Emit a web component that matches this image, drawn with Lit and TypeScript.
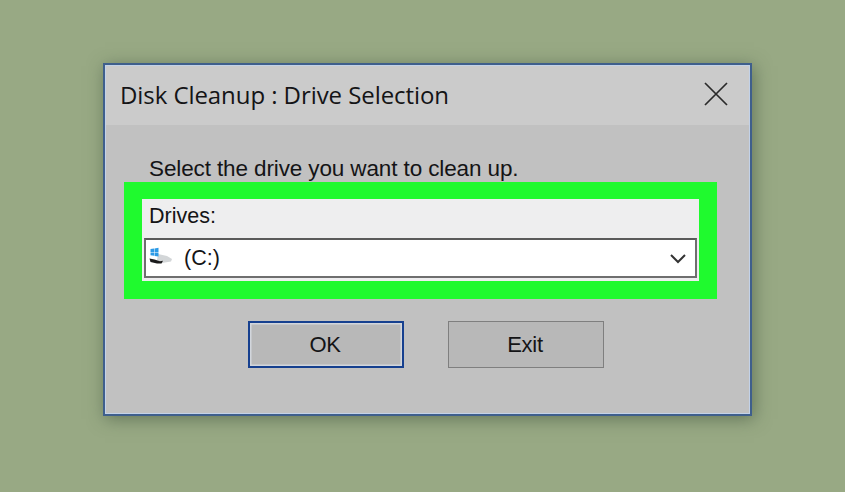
import { LitElement, html, css } from 'lit';
import { customElement } from 'lit/decorators.js';

@customElement('app-root')
export class AppRoot extends LitElement {
  static styles = css`
    :host {
      display: block;
      width: 845px;
      height: 492px;
      overflow: hidden;
      box-sizing: border-box;
      padding: 63px 0 0 103px;
      background: #98a984;
      font-family: 'Liberation Sans', Arial, sans-serif;
      color: #141416;
    }

    .window {
      box-sizing: border-box;
      width: 649px;
      height: 353px;
      border: 2px solid #3f5f8c;
      outline: 1px solid #c3d2e8;
      outline-offset: -3px;
      background: #c1c1c1;
      box-shadow: 2px 3px 16px rgba(50, 70, 50, 0.5);
      display: flex;
      flex-direction: column;
    }

    .titlebar {
      height: 60px;
      flex: none;
      box-sizing: border-box;
      padding: 0 23px 2px 15px;
      background: #cbcbcb;
      display: flex;
      align-items: center;
      justify-content: space-between;
    }

    .title {
      font-family: 'Open Sans', sans-serif;
      font-size: 24px;
      letter-spacing: -0.07px;
    }

    .close {
      width: 24px;
      height: 24px;
      display: block;
      margin-right: -1px;
    }

    .body {
      flex: 1;
      display: flex;
      flex-direction: column;
      padding: 30px 33px 0 19px;
    }

    .prompt {
      font-size: 22.5px;
      letter-spacing: -0.12px;
      line-height: 27px;
      padding-left: 25px;
    }

    .highlight {
      box-sizing: border-box;
      height: 117px;
      padding: 17px 18px 18px;
      background: #1ffa2e;
    }

    .group {
      height: 82px;
      box-sizing: border-box;
      background: #eeeeef;
      padding: 0 2px 3px;
      display: flex;
      flex-direction: column;
      justify-content: flex-end;
    }

    .group label {
      font-size: 21.5px;
      line-height: 34px;
      padding: 0 0 5px 5px;
    }

    .select {
      box-sizing: border-box;
      height: 40px;
      border: 2px solid #6f6f6f;
      border-top-color: #5a5a5a;
      background: #fff;
      display: flex;
      align-items: center;
      padding: 0 8px 0 3px;
      font-size: 21.5px;
    }

    .drive-icon {
      width: 25px;
      height: 22px;
      flex: none;
      margin-right: 10px;
    }

    .value {
      flex: 1;
    }

    .chevron {
      width: 18px;
      height: 12px;
      display: block;
      margin-top: 1px;
    }

    .actions {
      display: flex;
      gap: 44px;
      padding: 22px 0 0 124px;
    }

    button {
      box-sizing: border-box;
      width: 156px;
      height: 47px;
      padding: 0 2px 0 0;
      font: inherit;
      font-size: 22px;
      letter-spacing: -0.3px;
      color: inherit;
      background: #b8b8b8;
      border: 1.5px solid #7f7f7f;
    }

    button.default {
      border: 2px solid #16408f;
      box-shadow: inset 0 0 0 1.5px #d2d6dc;
    }
  `;

  render() {
    return html`
      <div class="window">
        <div class="titlebar">
          <span class="title">Disk Cleanup : Drive Selection</span>
          <svg class="close" viewBox="0 0 24 24" fill="none" stroke="#2a2a2a" stroke-width="1.7">
            <path d="M1 1L23 23M23 1L1 23" />
          </svg>
        </div>
        <div class="body">
          <div class="prompt">Select the drive you want to clean up.</div>
          <div class="highlight">
            <div class="group">
              <label>Drives:</label>
              <div class="select">
                <svg class="drive-icon" viewBox="0 0 25 22">
                  <path fill="#d3d6d8" d="M9 7l9 2 5 3-1 2.5-9 1.5-5-3z" />
                  <path fill="#2c9ae6" d="M1.5 2l3.6-.5v3.4H1.5zM5.6 1.4L9.5.8v4.1H5.6zM1.5 5.4h3.6v3.4l-3.6-.5zM5.6 5.4h3.9v4l-3.9-.5z" />
                  <path fill="#1b1b1b" d="M.5 11.5l5 1 5.5 1.7 3-.4-1.5 2.7H8L1.5 15z" />
                </svg>
                <span class="value">(C:)</span>
                <svg class="chevron" viewBox="0 0 18 12" fill="none" stroke="#333" stroke-width="2">
                  <path d="M2 2l7 7 7-7" />
                </svg>
              </div>
            </div>
          </div>
          <div class="actions">
            <button class="default">OK</button>
            <button>Exit</button>
          </div>
        </div>
      </div>
    `;
  }
}
